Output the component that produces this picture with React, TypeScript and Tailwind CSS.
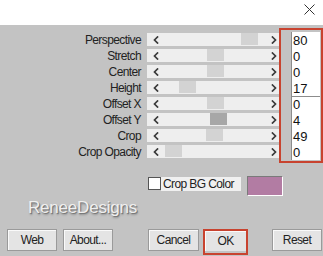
const FONT = "font-['Liberation_Sans',Arial,sans-serif] tracking-[-0.6px]"

type Row = { label: string; thumb: number; value: string; active?: boolean }

const ROWS: Row[] = [
  { label: 'Perspective', thumb: 94, value: '80' },
  { label: 'Stretch', thumb: 60, value: '0' },
  { label: 'Center', thumb: 60, value: '0' },
  { label: 'Height', thumb: 32, value: '17' },
  { label: 'Offset X', thumb: 60, value: '0' },
  { label: 'Offset Y', thumb: 63, value: '4', active: true },
  { label: 'Crop', thumb: 59, value: '49' },
  { label: 'Crop Opacity', thumb: 18, value: '0' },
]

function Chevron({ dir }: { dir: 'left' | 'right' }) {
  return (
    <svg viewBox="0 0 6 8" width="6" height="8" fill="none" stroke="#3a3a3a" strokeWidth="1.7" strokeLinecap="square">
      {dir === 'left' ? <path d="M4.5 1 1.5 4l3 3" /> : <path d="M1.5 1l3 3-3 3" />}
    </svg>
  )
}

function Slider({ row }: { row: Row }) {
  return (
    <div className="relative flex h-[13px] w-[132px] items-center justify-between bg-[#eeeeee] pl-[6px] pr-[2px]">
      <Chevron dir="left" />
      <div
        className={`absolute top-0 h-[12px] w-[17px] ${row.active ? 'bg-[#a7a7a7]' : 'bg-[#d3d3d3]'}`}
        style={{ left: row.thumb }}
      />
      <Chevron dir="right" />
    </div>
  )
}

function Btn({ children, className = '' }: { children: React.ReactNode; className?: string }) {
  return (
    <div
      className={`flex h-[22px] items-center justify-center border border-[#9a9a9a] bg-[#e4e4e4] text-[12px] text-[#222] shadow-[inset_1px_1px_0_#fafafa] ${className}`}
    >
      {children}
    </div>
  )
}

export default function App() {
  return (
    <div className={`flex h-[256px] w-[323px] flex-col overflow-hidden bg-[#c3c3c3] ${FONT}`}>
      {/* title strip */}
      <div className="flex h-[25px] shrink-0 items-start justify-end bg-white pr-[8px] pt-[4px]">
        <svg viewBox="0 0 11 11" width="11" height="11" stroke="#333" strokeWidth="1" fill="none">
          <path d="M0.5 0.5l10 10M10.5 0.5l-10 10" />
        </svg>
      </div>

      {/* sliders + value fields */}
      <div className="flex pt-[3px]">
        <div className="mt-[5px] flex flex-col">
          {ROWS.map((r) => (
            <div key={r.label} className="mb-[3px] flex h-[13px] items-center">
              <div className="w-[142px] whitespace-nowrap pr-[1px] text-right text-[12px] leading-none text-[#222]">{r.label}</div>
              <div className="w-[5px]" />
              <Slider row={r} />
            </div>
          ))}
        </div>
        <div className="border-2 border-[#c8432f] pb-[1px] pl-[10px] pr-[1px] pt-[2px]">
          {ROWS.map((r, i) => (
            <div
              key={r.label}
              className={`flex h-[16px] w-[29px] items-center border-l border-[#8c8c8c] bg-white pl-[1px] text-[13px] leading-none tracking-normal text-[#111] ${i === 4 ? 'border-t' : ''}`}
            >
              {r.value}
            </div>
          ))}
        </div>
      </div>

      {/* crop bg colour */}
      <div className="mt-[13px] flex h-[20px] items-start">
        <div className="w-[148px]" />
        <div className="mt-[1px] h-[13px] w-[13px] border border-[#555] bg-white" />
        <div className="mt-[1px] flex h-[14px] w-[80px] items-center whitespace-nowrap bg-[#f0f0f0] pl-[2px] text-[12px] leading-none text-[#222]">
          Crop BG Color
        </div>
        <div className="ml-[6px] h-[20px] w-[36px] border border-b-white border-l-[#7a7a7a] border-r-white border-t-[#7a7a7a] bg-[#b27ca3]" />
      </div>

      {/* brand */}
      <div className="mt-[2px] pl-[28px] text-[17px] leading-[20px] tracking-[-0.2px] text-[#efefef] [text-shadow:1px_1px_0_#7a7a7a,1px_2px_2px_#8a8a8a]">
        ReneeDesigns
      </div>

      {/* buttons */}
      <div className="mt-[11px] flex items-start pl-[7px]">
        <Btn className="w-[50px]">Web</Btn>
        <Btn className="ml-[6px] w-[50px]">About...</Btn>
        <Btn className="ml-[35px] w-[51px]">Cancel</Btn>
        <div className="ml-[4px] h-[26px] w-[45px] border-2 border-[#c8432f]">
          <div className="flex h-[20px] items-center justify-center bg-[#e4e4e4] text-[12px] text-[#222] shadow-[inset_1px_1px_0_#fafafa]">
            OK
          </div>
        </div>
        <Btn className="ml-[24px] w-[50px]">Reset</Btn>
      </div>
    </div>
  )
}
